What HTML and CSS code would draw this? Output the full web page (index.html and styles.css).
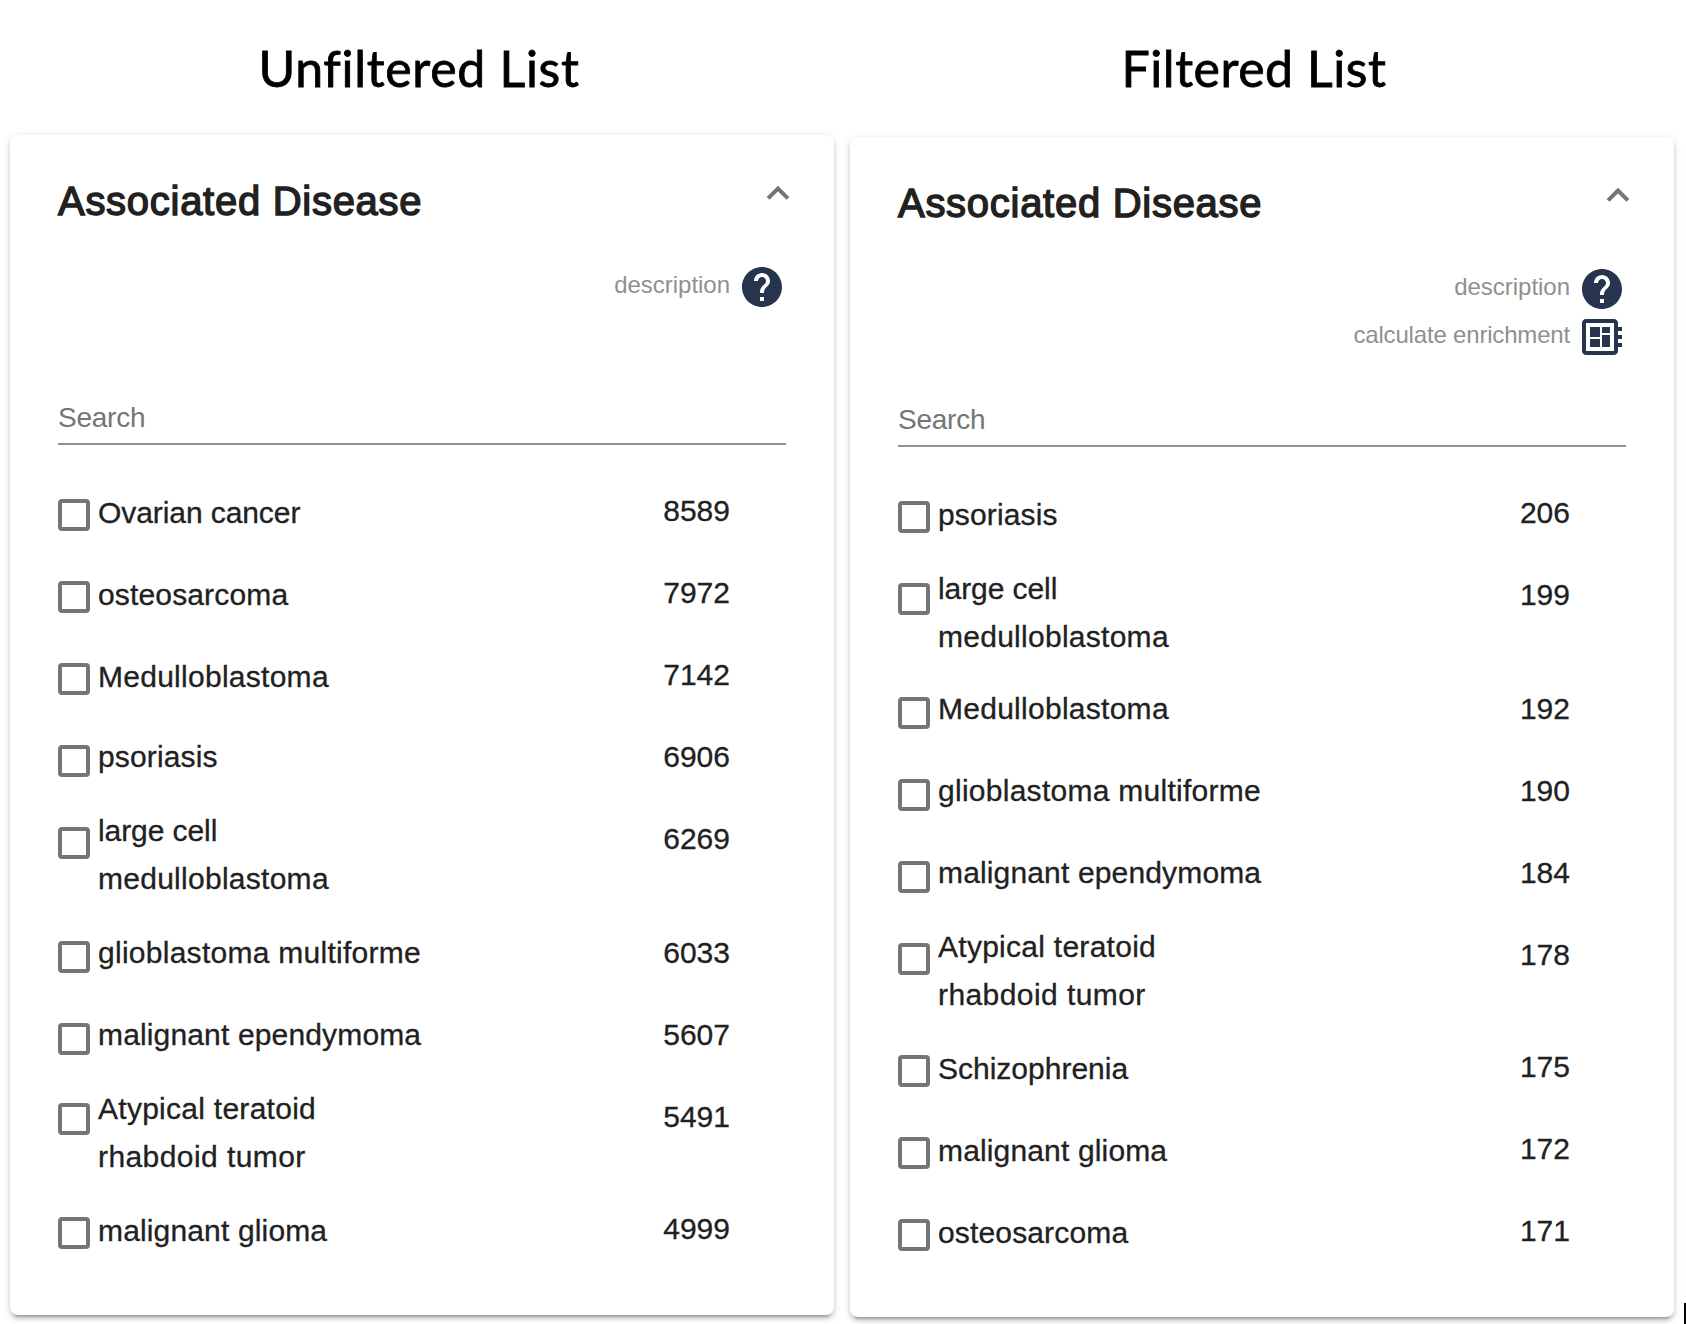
FILE: index.html
```html
<!DOCTYPE html>
<html lang="en">
<head>
<meta charset="utf-8">
<title>Associated Disease</title>
<link rel="stylesheet" href="styles.css">
</head>
<body>
<main class="page">
  <div class="column">
    <h1 class="title">Unfiltered List</h1>
    <section class="card">
      <header class="head">
        <h2 class="heading">Associated Disease</h2>
        <svg class="chevron" viewBox="0 0 28 24"><path d="M4.1 16.4 14 6.5l9.9 9.9"/></svg>
      </header>
      <div class="actions">
        <div class="action"><span class="action-label">description</span><svg class="icon" viewBox="0 0 24 24"><path d="M12 2C6.48 2 2 6.48 2 12s4.48 10 10 10 10-4.48 10-10S17.52 2 12 2zm1 17h-2v-2h2v2zm2.07-7.75-.9.92C13.45 12.9 13 13.5 13 15h-2v-.5c0-1.1.45-2.1 1.17-2.83l1.24-1.26c.37-.36.59-.86.59-1.41 0-1.1-.9-2-2-2s-2 .9-2 2H8c0-2.21 1.79-4 4-4s4 1.79 4 4c0 .88-.36 1.68-.93 2.25z"/></svg></div>
      </div>
      <div class="search">Search</div>
      <div class="list">
        <div class="row"><i class="box"></i><span class="name tight">Ovarian cancer</span><span class="count">8589</span></div>
        <div class="row"><i class="box"></i><span class="name">osteosarcoma</span><span class="count">7972</span></div>
        <div class="row"><i class="box"></i><span class="name wide">Medulloblastoma</span><span class="count">7142</span></div>
        <div class="row"><i class="box"></i><span class="name raised">psoriasis</span><span class="count">6906</span></div>
        <div class="row tall"><i class="box"></i><span class="name two-high"><span class="tight">large cell</span><br><span class="wide">medulloblastoma</span></span><span class="count">6269</span></div>
        <div class="row"><i class="box"></i><span class="name raised wide">glioblastoma multiforme</span><span class="count">6033</span></div>
        <div class="row short"><i class="box"></i><span class="name raised">malignant ependymoma</span><span class="count">5607</span></div>
        <div class="row tall"><i class="box"></i><span class="name two"><span class="wide">Atypical teratoid</span><br><span class="wider">rhabdoid tumor</span></span><span class="count low">5491</span></div>
        <div class="row"><i class="box"></i><span class="name">malignant glioma</span><span class="count">4999</span></div>
      </div>
    </section>
  </div>
  <div class="column filtered">
    <h1 class="title">Filtered List</h1>
    <section class="card">
      <header class="head">
        <h2 class="heading">Associated Disease</h2>
        <svg class="chevron" viewBox="0 0 28 24"><path d="M4.1 16.4 14 6.5l9.9 9.9"/></svg>
      </header>
      <div class="actions">
        <div class="action"><span class="action-label">description</span><svg class="icon" viewBox="0 0 24 24"><path d="M12 2C6.48 2 2 6.48 2 12s4.48 10 10 10 10-4.48 10-10S17.52 2 12 2zm1 17h-2v-2h2v2zm2.07-7.75-.9.92C13.45 12.9 13 13.5 13 15h-2v-.5c0-1.1.45-2.1 1.17-2.83l1.24-1.26c.37-.36.59-.86.59-1.41 0-1.1-.9-2-2-2s-2 .9-2 2H8c0-2.21 1.79-4 4-4s4 1.79 4 4c0 .88-.36 1.68-.93 2.25z"/></svg></div>
        <div class="action"><span class="action-label long">calculate enrichment</span><svg class="icon" viewBox="0 0 24 24"><path d="M22 9V7h-2V5c0-1.1-.9-2-2-2H4c-1.1 0-2 .9-2 2v14c0 1.1.9 2 2 2h14c1.1 0 2-.9 2-2v-2h2v-2h-2v-2h2v-2h-2V9h2zm-4 10H4V5h14v14zM6 13h5v4H6zm6-6h4v3h-4zM6 7h5v5H6zm6 4h4v6h-4z"/></svg></div>
      </div>
      <div class="search">Search</div>
      <div class="list">
        <div class="row"><i class="box"></i><span class="name">psoriasis</span><span class="count">206</span></div>
        <div class="row tall"><i class="box"></i><span class="name two"><span class="tight">large cell</span><br><span class="wide">medulloblastoma</span></span><span class="count">199</span></div>
        <div class="row"><i class="box"></i><span class="name raised wide">Medulloblastoma</span><span class="count">192</span></div>
        <div class="row"><i class="box"></i><span class="name raised wide">glioblastoma multiforme</span><span class="count">190</span></div>
        <div class="row"><i class="box"></i><span class="name raised">malignant ependymoma</span><span class="count">184</span></div>
        <div class="row tall short"><i class="box"></i><span class="name two-high"><span class="wide">Atypical teratoid</span><br><span class="wider">rhabdoid tumor</span></span><span class="count">178</span></div>
        <div class="row"><i class="box"></i><span class="name plain">Schizophrenia</span><span class="count">175</span></div>
        <div class="row"><i class="box"></i><span class="name">malignant glioma</span><span class="count">172</span></div>
        <div class="row"><i class="box"></i><span class="name">osteosarcoma</span><span class="count">171</span></div>
      </div>
    </section>
  </div>
  <i class="caret"></i>
</main>
</body>
</html>
```
FILE: styles.css
```css
* { box-sizing: border-box; }
body { margin: 0; background: #fff; font-family: "Liberation Sans", Arial, sans-serif; color: #212121; }
.page { position: relative; display: flex; gap: 16px; width: 1686px; height: 1324px; padding: 0 12px 0 10px; overflow: hidden; }
.column { width: 824px; }
.title { margin: 0; height: 135px; padding: 38px 6px 0 0; font: 400 50px/60px Lato, sans-serif; letter-spacing: .7px; -webkit-text-stroke: .8px #000; color: #000; text-align: center; white-space: nowrap; }
.filtered .title { height: 137px; padding-right: 16px; letter-spacing: .55px; }
.card { height: 1180px; padding: 48px; border-radius: 8px; background: #fff; box-shadow: 0 6px 2px -4px rgba(0,0,0,.2), 0 4px 4px rgba(0,0,0,.14), 0 2px 10px rgba(0,0,0,.12); }
.head { display: flex; justify-content: space-between; height: 80px; }
.heading { margin: -2px 0 0; font-size: 40px; font-weight: 400; line-height: 40px; letter-spacing: .72px; -webkit-text-stroke: 1.4px #212121; white-space: nowrap; }
.chevron { width: 28px; height: 24px; margin: -1px -6px 0 0; fill: none; stroke: #757575; stroke-width: 4; }
.actions { height: 130px; }
.action { display: flex; justify-content: flex-end; gap: 8px; height: 48px; }
.action-label { font-size: 24px; line-height: 43px; letter-spacing: -.02px; color: #909090; }
.action-label.long { letter-spacing: -.18px; }
.icon { width: 48px; height: 48px; fill: #26344d; }
.search { height: 52px; border-bottom: 2px solid #919191; font-size: 28px; line-height: 50px; letter-spacing: -.25px; color: #757575; }
.list { padding-top: 54px; }
.row { display: flex; height: 82px; font-size: 30px; line-height: 48px; -webkit-text-stroke: .3px #212121; }
.row.tall { height: 114px; }
.row.short { height: 80px; }
.row.tall.short { height: 112px; }
.box { width: 32px; height: 32px; margin-right: 8px; border: 4px solid #757575; border-radius: 4px; }
.name { width: 400px; margin-top: -10px; letter-spacing: .15px; white-space: nowrap; }
.name.raised { margin-top: -12px; }
.name.two { margin-top: -18px; }
.name.two-high { margin-top: -20px; }
.tight { letter-spacing: -.08px; }
.plain { letter-spacing: 0; }
.wide { letter-spacing: .27px; }
.wider { letter-spacing: .42px; }
.count { width: 232px; margin-top: -12px; text-align: right; }
.count.low { margin-top: -10px; }
.caret { position: absolute; right: 0; bottom: 0; width: 2px; height: 21px; background: #000; }
```
